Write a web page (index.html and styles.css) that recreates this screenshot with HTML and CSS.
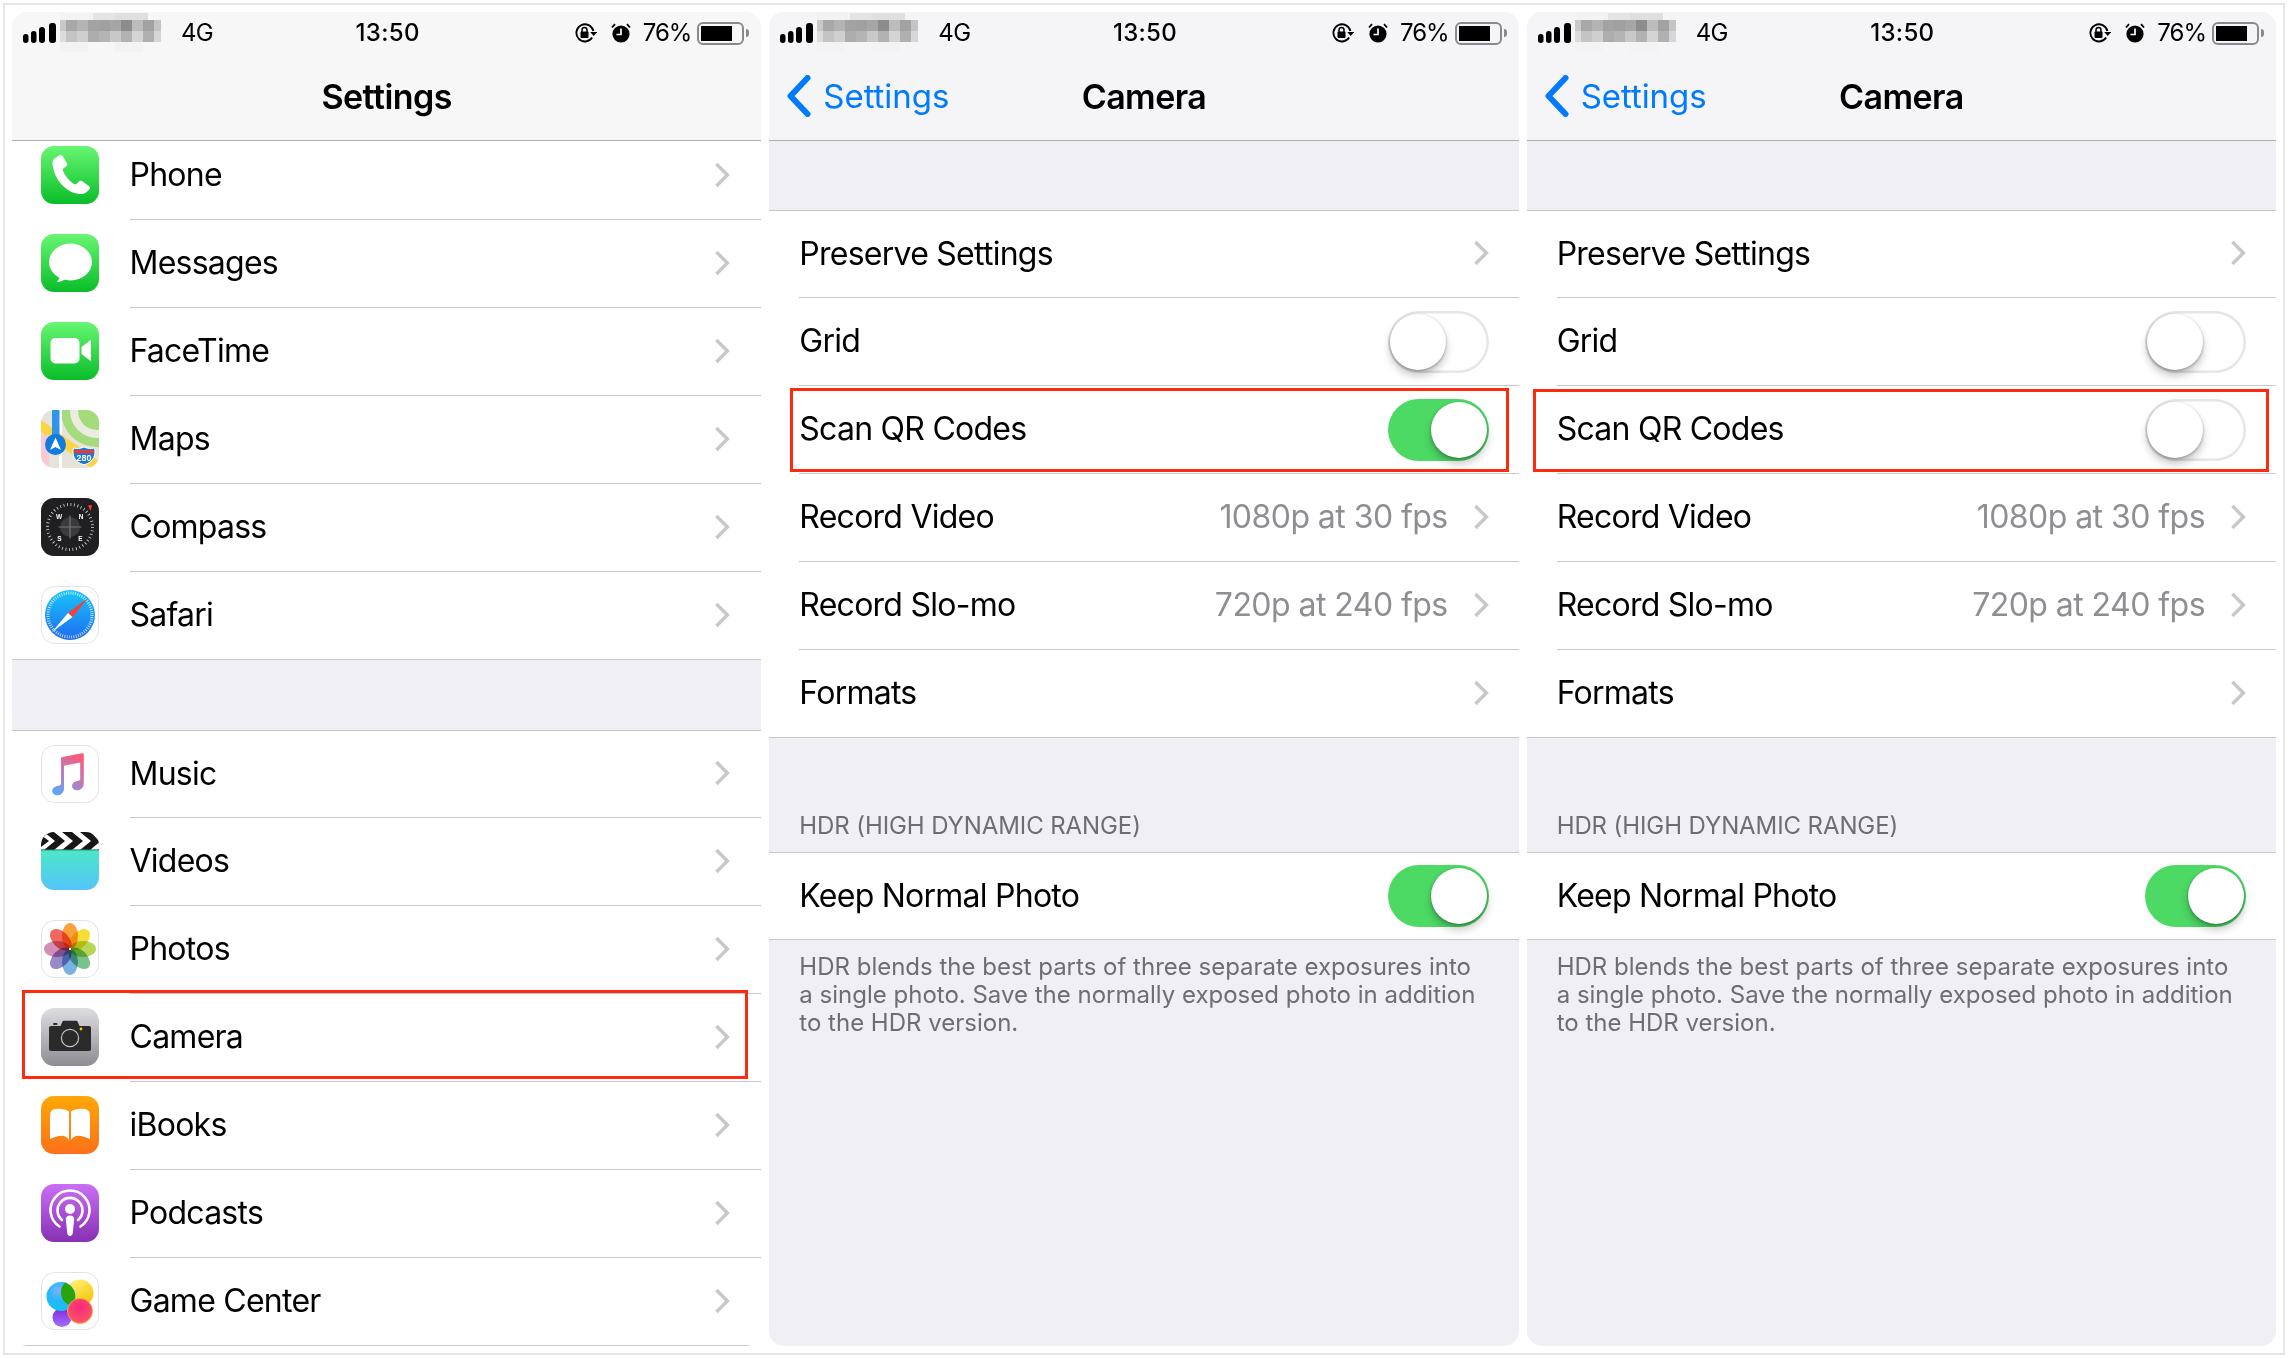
FILE: index.html
```html
<!DOCTYPE html>
<html lang="en">
<head>
<meta charset="utf-8">
<title>Camera settings: Scan QR Codes</title>
<link rel="stylesheet" href="styles.css">
</head>
<body>
<svg class="defs" aria-hidden="true">
  <symbol id="signal" viewBox="0 0 34 20"><rect x="0" y="11" width="5.5" height="9" rx="2.7"/><rect x="8" y="8" width="5.5" height="12" rx="2.7"/><rect x="16" y="4" width="6" height="16" rx="3"/><rect x="26" y="0" width="7" height="20" rx="3"/></symbol>
  <symbol id="carrier" viewBox="0 0 110 40">
    <g fill="#f3f3f3"><rect x="0" y="0" width="33" height="7"/><rect x="0" y="29" width="28" height="10"/><rect x="55" y="29" width="28" height="10"/></g>
    <g fill="#e4e4e4"><rect x="33" y="0" width="22" height="7"/><rect x="55" y="0" width="33" height="7" fill="#dfdfdf"/></g>
    <rect x="0" y="7" width="6" height="11" fill="#c9c9c9"/><rect x="6" y="7" width="11" height="11" fill="#a8a8a8"/><rect x="17" y="7" width="11" height="11" fill="#b4b4b4"/><rect x="28" y="7" width="11" height="11" fill="#a3a3a3"/><rect x="39" y="7" width="11" height="11" fill="#a0a0a0"/><rect x="50" y="7" width="11" height="11" fill="#a6a6a6"/><rect x="61" y="7" width="11" height="11" fill="#8c8c8c"/><rect x="72" y="7" width="11" height="11" fill="#bcbcbc"/><rect x="83" y="7" width="11" height="11" fill="#a2a2a2"/><rect x="94" y="7" width="7" height="11" fill="#c4c4c4"/>
    <rect x="0" y="18" width="6" height="11" fill="#dcdcdc"/><rect x="6" y="18" width="11" height="11" fill="#c4c4c4"/><rect x="17" y="18" width="11" height="11" fill="#cfcfcf"/><rect x="28" y="18" width="11" height="11" fill="#adadad"/><rect x="39" y="18" width="11" height="11" fill="#b4b4b4"/><rect x="50" y="18" width="11" height="11" fill="#c8c8c8"/><rect x="61" y="18" width="11" height="11" fill="#b2b2b2"/><rect x="72" y="18" width="11" height="11" fill="#d4d4d4"/><rect x="83" y="18" width="11" height="11" fill="#b0b0b0"/><rect x="94" y="18" width="7" height="11" fill="#d6d6d6"/>
  </symbol>
  <symbol id="rotlock" viewBox="0 0 22 20">
    <path d="M17.2 14.6A8.6 8.6 0 1 1 18.4 8" fill="none" stroke="#000" stroke-width="1.9"/><path d="M15.2 9h7l-3.5 4z" fill="#000"/>
    <rect x="5.5" y="8.5" width="8" height="6.5" rx="1" fill="#000"/><path d="M7 9V7a2.5 2.5 0 0 1 5 0v2" fill="none" stroke="#000" stroke-width="1.5"/>
  </symbol>
  <symbol id="alarm" viewBox="0 0 20 20">
    <circle cx="10" cy="11" r="8.6" fill="#000"/><path d="M10 5.5V11.5H5.5" fill="none" stroke="#fff" stroke-width="1.7"/>
    <path d="M1 4.5 4 1.2M19 4.5 16 1.2" fill="none" stroke="#000" stroke-width="1.8"/>
  </symbol>
  <symbol id="chev" viewBox="0 0 16 26"><path d="M2.4 2 13.4 13 2.4 24" fill="none" stroke="#c7c7cc" stroke-width="3.4"/></symbol>
  <symbol id="back" viewBox="0 0 25 42"><path d="M21.5 3 4.5 21 21.5 39" fill="none" stroke="#007aff" stroke-width="6" stroke-linecap="round" stroke-linejoin="round"/></symbol>
  <linearGradient id="gGreen" x1="0" y1="0" x2="0" y2="1"><stop offset="0" stop-color="#68f672"/><stop offset="1" stop-color="#0abd2a"/></linearGradient>
  <linearGradient id="gSafari" x1="0" y1="0" x2="0" y2="1"><stop offset="0" stop-color="#18c5fb"/><stop offset="1" stop-color="#1e6cf0"/></linearGradient>
  <linearGradient id="gMusic" x1="0.75" y1="0" x2="0.25" y2="1"><stop offset="0" stop-color="#fb5a74"/><stop offset=".55" stop-color="#b77ec0"/><stop offset="1" stop-color="#5aa8fa"/></linearGradient>
  <linearGradient id="gVideos" x1="0" y1="0" x2="0" y2="1"><stop offset="0" stop-color="#4ce8c6"/><stop offset="1" stop-color="#55c4fc"/></linearGradient>
  <linearGradient id="gCamera" x1="0" y1="0" x2="0" y2="1"><stop offset="0" stop-color="#dedee2"/><stop offset="1" stop-color="#8c8c92"/></linearGradient>
  <linearGradient id="gBooks" x1="0" y1="0" x2="0" y2="1"><stop offset="0" stop-color="#ffa807"/><stop offset="1" stop-color="#fc6f1a"/></linearGradient>
  <linearGradient id="gPod" x1="0" y1="0" x2="0" y2="1"><stop offset="0" stop-color="#ca6ff5"/><stop offset="1" stop-color="#8730b2"/></linearGradient>
  <radialGradient id="gBlue" cx=".4" cy=".3" r=".8"><stop offset="0" stop-color="#7fb0ff"/><stop offset=".45" stop-color="#22b8f8"/><stop offset="1" stop-color="#17c3f5"/></radialGradient>
  <linearGradient id="gYel" x1=".2" y1="0" x2=".8" y2="1"><stop offset="0" stop-color="#fff176"/><stop offset="1" stop-color="#f2c200"/></linearGradient>
  <radialGradient id="gPink" cx=".5" cy=".35" r=".7"><stop offset="0" stop-color="#f8267e"/><stop offset="1" stop-color="#ff5a63"/></radialGradient>
  <linearGradient id="gPur" x1="0" y1="0" x2="0" y2="1"><stop offset="0" stop-color="#7e2bd8"/><stop offset="1" stop-color="#a66cff"/></linearGradient>
</svg>

<main class="frame">

  <section class="phone phone-list">
    <header class="bar">
      <div class="status">
        <div class="status-left"><svg class="signal"><use href="#signal"/></svg><svg class="carrier"><use href="#carrier"/></svg><span class="net">4G</span></div>
        <div class="clock">13:50</div>
        <div class="status-right"><svg class="rotlock"><use href="#rotlock"/></svg><svg class="alarm"><use href="#alarm"/></svg><span class="pct">76%</span><div class="battery"><div class="cell"><div class="charge"></div></div><div class="nub"></div></div></div>
      </div>
      <nav class="nav nav-center"><h1 class="title">Settings</h1></nav>
    </header>

    <div class="group group-top">
      <div class="row row-app">
        <svg class="app" viewBox="0 0 58 58"><rect width="58" height="58" rx="13" fill="url(#gGreen)"/><path d="M15.5 11.2c-2.6.9-4.2 2.9-4 6 .6 8 4 15.800 9.300 21.600 5.300 5.700 11.700 8.900 18.900 9.300 3.300.2 7.100-2.300 9-5.300.5-.9.300-1.900-.5-2.500l-7.200-5.200c-1-.7-2-.6-2.800.2l-2.600 2.400c-.8.700-1.700.8-2.600.2-2.400-1.500-4.500-3.400-6.500-5.700-2-2.400-3.500-4.800-4.500-7.400-.4-1-.1-1.900.7-2.500l2.700-2.200c.9-.7 1.100-1.700.6-2.700l-4.600-7.800c-.9-.6-1.500-.9-2.400-.6z" fill="#fff"/></svg>
        <div class="row-body"><span class="label">Phone</span><svg class="chev"><use href="#chev"/></svg></div>
      </div>
      <div class="row row-app">
        <svg class="app" viewBox="0 0 58 58"><rect width="58" height="58" rx="13" fill="url(#gGreen)"/><ellipse cx="29.500" cy="28" rx="21.500" ry="18.500" fill="#fff"/><path d="M19 41c-.2 3-1.500 5.200-3.300 7 3.200.2 6.700-1.400 9-3.500z" fill="#fff"/></svg>
        <div class="row-body"><span class="label">Messages</span><svg class="chev"><use href="#chev"/></svg></div>
      </div>
      <div class="row row-app">
        <svg class="app" viewBox="0 0 58 58"><rect width="58" height="58" rx="13" fill="url(#gGreen)"/><rect x="9.500" y="16" width="29" height="25.500" rx="5" fill="#fff"/><path d="M40.500 25 49 18.500c.6-.4 1-.2 1 .5v19c0 .7-.4.900-1 .5l-8.500-6.500z" fill="#fff"/></svg>
        <div class="row-body"><span class="label">FaceTime</span><svg class="chev"><use href="#chev"/></svg></div>
      </div>
      <div class="row row-app">
        <svg class="app" viewBox="0 0 58 58">
          <defs><clipPath id="clipMaps"><rect width="58" height="58" rx="13"/></clipPath></defs>
          <g clip-path="url(#clipMaps)">
            <rect width="58" height="58" fill="#e6e3d9"/>
            <circle cx="56" cy="1" r="36" fill="#a4dc7c"/><circle cx="56" cy="1" r="27" fill="#ecebe2"/><circle cx="56" cy="1" r="19" fill="#a4dc7c"/>
            <rect x="18" y="0" width="3" height="58" fill="#fff"/>
            <path d="M0 10 58 51V58H50L0 22z" fill="#fdd447"/>
            <rect x="0" y="25" width="8" height="33" fill="#fbc8d6"/>
            <rect x="11" y="0" width="7.500" height="30" fill="#3095e8"/>
            <circle cx="14.500" cy="34.500" r="10.500" fill="#0f7ae0"/>
            <path d="M14.500 27.500 20 40l-5.500-3-5.500 3z" fill="#fff"/>
            <path d="M32.500 38c3 .8 7 .8 10.500-1 3.500 1.800 7.500 1.800 10.500 1 1.500 6 0 14-10.500 16.800C32.500 52 31 44 32.500 38z" fill="#1b78d8" stroke="#fff" stroke-width="1"/>
            <rect x="33" y="40" width="20" height="3.200" fill="#e43a42"/>
            <text x="43" y="51" class="shield-text" text-anchor="middle">280</text>
          </g>
        </svg>
        <div class="row-body"><span class="label">Maps</span><svg class="chev"><use href="#chev"/></svg></div>
      </div>
      <div class="row row-app">
        <svg class="app" viewBox="0 0 58 58">
          <rect width="58" height="58" rx="13" fill="#1f1f21"/>
          <circle cx="29" cy="29" r="22.500" fill="none" stroke="#d8d8d8" stroke-width="3" stroke-dasharray=".8 2.730"/>
          <circle cx="29" cy="29" r="10" fill="#3a3a3c"/>
          <path d="M29 17.500V40.500M17.500 29H40.500" stroke="#777" stroke-width="1.200"/>
          <path d="M47 7.500 51 7 49.500 13z" fill="#ff3b30"/>
          <text x="18" y="21" class="compass-text" text-anchor="middle">W</text><text x="40" y="21" class="compass-text" text-anchor="middle">N</text><text x="18.500" y="43" class="compass-text" text-anchor="middle">S</text><text x="39.500" y="43" class="compass-text" text-anchor="middle">E</text>
        </svg>
        <div class="row-body"><span class="label">Compass</span><svg class="chev"><use href="#chev"/></svg></div>
      </div>
      <div class="row row-app row-full">
        <svg class="app" viewBox="0 0 58 58">
          <rect x=".5" y=".5" width="57" height="57" rx="13" fill="#fff" stroke="#e3e3e3"/>
          <circle cx="29" cy="29" r="25" fill="url(#gSafari)"/>
          <circle cx="29" cy="29" r="22" fill="none" stroke="#fff" stroke-opacity=".75" stroke-width="3" stroke-dasharray=".9 1.400"/>
          <path d="M47 12 31.500 31 27 27z" fill="#ff3b30"/><path d="M11 46 27 27 31.500 31z" fill="#fff"/>
        </svg>
        <div class="row-body"><span class="label">Safari</span><svg class="chev"><use href="#chev"/></svg></div>
      </div>
    </div>

    <div class="band band-list"></div>

    <div class="group">
      <div class="row row-app row-first">
        <svg class="app" viewBox="0 0 58 58">
          <rect x=".5" y=".5" width="57" height="57" rx="13" fill="#fff" stroke="#e3e3e3"/>
          <path d="M20 13.500c0-.9.500-1.400 1.300-1.600L41 8.200c1.100-.2 1.800.3 1.800 1.400V38.500c0 3.700-2.800 6.800-6.700 6.800-3 0-5.100-1.700-5.100-4.300 0-2.700 2-4.400 5.100-5 1.500-.3 2.700-.6 3-1.300.1-.3.100-.6.100-1.100V17.500L23 20.800V43.500c0 3.700-2.800 6.800-6.700 6.800-3 0-5.100-1.700-5.100-4.300 0-2.700 2-4.400 5.100-5 1.500-.3 3.700-.6 3.700-2.500z" fill="url(#gMusic)"/>
        </svg>
        <div class="row-body"><span class="label">Music</span><svg class="chev"><use href="#chev"/></svg></div>
      </div>
      <div class="row row-app">
        <svg class="app" viewBox="0 0 58 58">
          <defs><clipPath id="clipVid"><rect width="58" height="58" rx="13"/></clipPath></defs>
          <g clip-path="url(#clipVid)">
            <rect y="18" width="58" height="40" fill="url(#gVideos)"/>
            <path d="M0 0H50L58 9V18H0z" fill="#171717"/>
            <path d="M0 3 8 9 0 15V18H3L14 9 3 0H0zM13 0 24 9 13 18H21L32 9 21 0zM31 0 42 9 31 18H39L50 9 39 0zM49 0 58 7.500V10.500L49 18H57L58 17V12 6L51 0z" fill="#fff"/>
            <rect y="17.400" width="58" height="1" fill="#2a7a63"/>
          </g>
        </svg>
        <div class="row-body"><span class="label">Videos</span><svg class="chev"><use href="#chev"/></svg></div>
      </div>
      <div class="row row-app">
        <svg class="app" viewBox="0 0 58 58">
          <rect x=".5" y=".5" width="57" height="57" rx="13" fill="#fff" stroke="#e3e3e3"/>
          <g class="petals">
            <ellipse cx="29" cy="16" rx="8" ry="13" fill="#f79a2c"/>
            <ellipse cx="29" cy="16" rx="8" ry="13" fill="#f5dc27" transform="rotate(45 29 29)"/>
            <ellipse cx="29" cy="16" rx="8" ry="13" fill="#b2d34a" transform="rotate(90 29 29)"/>
            <ellipse cx="29" cy="16" rx="8" ry="13" fill="#6dbd82" transform="rotate(135 29 29)"/>
            <ellipse cx="29" cy="16" rx="8" ry="13" fill="#70aade" transform="rotate(180 29 29)"/>
            <ellipse cx="29" cy="16" rx="8" ry="13" fill="#8f82c2" transform="rotate(225 29 29)"/>
            <ellipse cx="29" cy="16" rx="8" ry="13" fill="#cc86b2" transform="rotate(270 29 29)"/>
            <ellipse cx="29" cy="16" rx="8" ry="13" fill="#ef5c52" transform="rotate(315 29 29)"/>
          </g>
          <circle cx="29" cy="29" r="1.200" fill="#fff"/>
        </svg>
        <div class="row-body"><span class="label">Photos</span><svg class="chev"><use href="#chev"/></svg></div>
      </div>
      <div class="row row-app">
        <svg class="app" viewBox="0 0 58 58">
          <rect width="58" height="58" rx="13" fill="url(#gCamera)"/>
          <path d="M10 18h9.500l2-4.500c.3-.6.700-.8 1.300-.8h12.400c.6 0 1 .2 1.300.8l2 4.500H48c1.200 0 2 .8 2 2v21c0 1.200-.8 2-2 2H10c-1.200 0-2-.8-2-2V20c0-1.200.8-2 2-2z" fill="#2a2a2b"/>
          <rect x="12" y="15" width="4.500" height="2" rx="1" fill="#2a2a2b"/>
          <circle cx="29" cy="30" r="8.600" fill="none" stroke="#c2c2c2" stroke-width="1.200"/>
          <circle cx="40" cy="21" r="1.400" fill="#ffc800"/>
        </svg>
        <div class="row-body"><span class="label">Camera</span><svg class="chev"><use href="#chev"/></svg></div>
        <div class="mark mark-camera"></div>
      </div>
      <div class="row row-app">
        <svg class="app" viewBox="0 0 58 58">
          <rect width="58" height="58" rx="13" fill="url(#gBooks)"/>
          <path d="M9 19c0-3.500 2-5.500 5-6 5-.8 10.500-.3 14 2.500V44c-1.500-2.700-4.200-4.300-7-4.300-4.500 0-7.500 1.600-12 3.300z" fill="#fff"/>
          <path d="M49 19c0-3.500-2-5.500-5-6-5-.8-10.500-.3-14 2.500V44c1.500-2.700 4.200-4.300 7-4.300 4.500 0 7.500 1.600 12 3.300z" fill="#fff"/>
        </svg>
        <div class="row-body"><span class="label">iBooks</span><svg class="chev"><use href="#chev"/></svg></div>
      </div>
      <div class="row row-app">
        <svg class="app" viewBox="0 0 58 58">
          <rect width="58" height="58" rx="13" fill="url(#gPod)"/>
          <path d="M18.500 42.500A19.500 19.500 0 1 1 39.500 42.500" fill="none" stroke="#fff" stroke-width="2.600" stroke-linecap="round"/>
          <path d="M21 36A12.500 12.500 0 1 1 37 36" fill="none" stroke="#fff" stroke-width="2.600" stroke-linecap="round"/>
          <circle cx="29" cy="25" r="5" fill="#fff"/>
          <path d="M24.800 35c0-2 1.800-3.500 4.200-3.500s4.200 1.500 4.200 3.500l-1.500 14.500c-.3 1.500-1.300 2.500-2.700 2.500s-2.400-1-2.700-2.500z" fill="#fff"/>
        </svg>
        <div class="row-body"><span class="label">Podcasts</span><svg class="chev"><use href="#chev"/></svg></div>
      </div>
      <div class="row row-app row-last">
        <svg class="app" viewBox="0 0 58 58">
          <rect x=".5" y=".5" width="57" height="57" rx="13" fill="#fff" stroke="#e3e3e3"/>
          <circle cx="21" cy="45.500" r="9.500" fill="url(#gPur)"/>
          <circle cx="39" cy="21" r="13.500" fill="url(#gYel)"/>
          <circle cx="20" cy="24.500" r="14.500" fill="url(#gBlue)"/>
          <path d="M24.500 10.700A14.500 14.500 0 0 1 33.800 27 14 14 0 0 1 30.200 33.500 13.500 13.500 0 0 1 25.500 9.500z" fill="#2aa40d"/>
          <circle cx="39" cy="39" r="12.500" fill="url(#gPink)" stroke="#ffac2a" stroke-width=".8"/>
        </svg>
        <div class="row-body"><span class="label">Game Center</span><svg class="chev"><use href="#chev"/></svg></div>
      </div>
      <div class="end-rule"></div>
    </div>
  </section>

  <section class="phone phone-detail">
    <header class="bar bar-tint">
      <div class="status">
        <div class="status-left"><svg class="signal"><use href="#signal"/></svg><svg class="carrier"><use href="#carrier"/></svg><span class="net">4G</span></div>
        <div class="clock">13:50</div>
        <div class="status-right"><svg class="rotlock"><use href="#rotlock"/></svg><svg class="alarm"><use href="#alarm"/></svg><span class="pct">76%</span><div class="battery"><div class="cell"><div class="charge"></div></div><div class="nub"></div></div></div>
      </div>
      <nav class="nav nav-back">
        <div class="back"><svg class="back-chev"><use href="#back"/></svg><span class="back-text">Settings</span></div>
        <h1 class="title">Camera</h1>
      </nav>
    </header>
    <div class="band band-top"></div>
    <div class="group">
      <div class="row row-first"><div class="row-body"><span class="label">Preserve Settings</span><svg class="chev"><use href="#chev"/></svg></div></div>
      <div class="row"><div class="row-body"><span class="label">Grid</span><div class="toggle"><div class="knob"></div></div></div></div>
      <div class="row"><div class="row-body"><span class="label">Scan QR Codes</span><div class="toggle toggle-on"><div class="knob"></div></div></div><div class="mark mark-scan-on"></div></div>
      <div class="row"><div class="row-body"><span class="label">Record Video</span><span class="value">1080p at 30 fps</span><svg class="chev"><use href="#chev"/></svg></div></div>
      <div class="row"><div class="row-body"><span class="label">Record Slo-mo</span><span class="value">720p at 240 fps</span><svg class="chev"><use href="#chev"/></svg></div></div>
      <div class="row row-full"><div class="row-body"><span class="label">Formats</span><svg class="chev"><use href="#chev"/></svg></div></div>
    </div>
    <div class="section-head">HDR (HIGH DYNAMIC RANGE)</div>
    <div class="group">
      <div class="row row-full row-first"><div class="row-body"><span class="label">Keep Normal Photo</span><div class="toggle toggle-on"><div class="knob"></div></div></div></div>
    </div>
    <p class="footnote">HDR blends the best parts of three separate exposures into<br>a single photo. Save the normally exposed photo in addition<br>to the HDR version.</p>
  </section>

  <section class="phone phone-detail">
    <header class="bar bar-tint">
      <div class="status">
        <div class="status-left"><svg class="signal"><use href="#signal"/></svg><svg class="carrier"><use href="#carrier"/></svg><span class="net">4G</span></div>
        <div class="clock">13:50</div>
        <div class="status-right"><svg class="rotlock"><use href="#rotlock"/></svg><svg class="alarm"><use href="#alarm"/></svg><span class="pct">76%</span><div class="battery"><div class="cell"><div class="charge"></div></div><div class="nub"></div></div></div>
      </div>
      <nav class="nav nav-back">
        <div class="back"><svg class="back-chev"><use href="#back"/></svg><span class="back-text">Settings</span></div>
        <h1 class="title">Camera</h1>
      </nav>
    </header>
    <div class="band band-top"></div>
    <div class="group">
      <div class="row row-first"><div class="row-body"><span class="label">Preserve Settings</span><svg class="chev"><use href="#chev"/></svg></div></div>
      <div class="row"><div class="row-body"><span class="label">Grid</span><div class="toggle"><div class="knob"></div></div></div></div>
      <div class="row"><div class="row-body"><span class="label">Scan QR Codes</span><div class="toggle"><div class="knob"></div></div></div><div class="mark mark-scan-off"></div></div>
      <div class="row"><div class="row-body"><span class="label">Record Video</span><span class="value">1080p at 30 fps</span><svg class="chev"><use href="#chev"/></svg></div></div>
      <div class="row"><div class="row-body"><span class="label">Record Slo-mo</span><span class="value">720p at 240 fps</span><svg class="chev"><use href="#chev"/></svg></div></div>
      <div class="row row-full"><div class="row-body"><span class="label">Formats</span><svg class="chev"><use href="#chev"/></svg></div></div>
    </div>
    <div class="section-head">HDR (HIGH DYNAMIC RANGE)</div>
    <div class="group">
      <div class="row row-full row-first"><div class="row-body"><span class="label">Keep Normal Photo</span><div class="toggle toggle-on"><div class="knob"></div></div></div></div>
    </div>
    <p class="footnote">HDR blends the best parts of three separate exposures into<br>a single photo. Save the normally exposed photo in addition<br>to the HDR version.</p>
  </section>

</main>
</body>
</html>
```

FILE: styles.css
```css
* { box-sizing: border-box; }

html, body {
  margin: 0;
  background: #fff;
}

body {
  width: 2289px;
  height: 1358px;
  overflow: hidden;
  padding: 3px 4px 3px 3px;
  font-family: Inter, "Noto Sans", "Liberation Sans", sans-serif;
  color: #000;
}

.defs {
  position: absolute;
  width: 0;
  height: 0;
}

.frame {
  height: 1352px;
  border: 2px solid #e6e6e6;
  padding: 7px;
  display: grid;
  grid-template-columns: repeat(3, 1fr);
  gap: 8px;
}

.phone {
  height: 1334px;
  border-radius: 15px;
  overflow: hidden;
  display: flex;
  flex-direction: column;
}

.phone-list { background: #fff; }
.phone-detail { background: #efeff4; }

/* top bar */
.bar {
  position: relative;
  z-index: 2;
  height: 129px;
  flex: none;
  background: #f7f7f7;
  border-bottom: 1.5px solid #aeaeb2;
}

.bar-tint { background: #f5f5f8; }

.status {
  height: 42px;
  display: grid;
  grid-template-columns: 1fr auto 1fr;
  align-items: center;
}

.status-left {
  display: flex;
  align-items: center;
  padding-left: 11px;
}

.signal { width: 34px; height: 20px; fill: #000; flex: none; }
.carrier { width: 110px; height: 40px; margin-left: 3px; margin-right: 11px; flex: none; }

.net, .pct {
  font-size: 24px;
  line-height: 40px;
  letter-spacing: -0.7px;
}

.pct { letter-spacing: -1px; }

.clock {
  margin-left: 2px;
  font-size: 24px;
  font-weight: 500;
  line-height: 40px;
  letter-spacing: 0.3px;
}

.status-right {
  display: flex;
  align-items: center;
  justify-content: flex-end;
  padding-right: 12px;
}

.rotlock { width: 22px; height: 20px; flex: none; }
.alarm { width: 20px; height: 20px; margin-left: 14px; margin-right: 12px; flex: none; }
.pct { margin-right: 6px; }

.battery { display: flex; align-items: center; flex: none; }

.cell {
  width: 47px;
  height: 23px;
  border: 2px solid #8a8a8e;
  border-radius: 6px;
  padding: 2px;
}

.charge { width: 31px; height: 15px; background: #000; }

.nub {
  width: 3px;
  height: 8px;
  margin-left: 2px;
  background: #8a8a8e;
  border-radius: 0 3px 3px 0;
}

.nav {
  height: 86px;
  padding-bottom: 2px;
  display: grid;
  align-items: center;
}

.nav-center { justify-items: center; }

.nav-back {
  grid-template-columns: 1fr auto 1fr;
}

.title {
  margin: 0;
  font-size: 34px;
  font-weight: 600;
  letter-spacing: -0.55px;
}

.back {
  display: flex;
  align-items: center;
  padding-left: 17px;
}

.back-chev { width: 25px; height: 42px; flex: none; }

.back-text {
  margin-left: 12px;
  font-size: 33px;
  letter-spacing: -0.05px;
  color: #007aff;
}

/* lists */
.group { background: #fff; }
.group-top { overflow: hidden; }
.group-top .row:first-child { margin-top: -9px; }

.row {
  position: relative;
  height: 88px;
  display: flex;
  padding-left: 30px;
}

.row-app { padding-left: 29px; }
.row-first { height: 87px; }

.row-body {
  flex: 1;
  min-width: 0;
  display: flex;
  align-items: center;
  padding-right: 30px;
  border-bottom: 1.5px solid #c8c7cc;
}

.row-app .row-body { padding-right: 31.5px; }

.row-full { padding-left: 0; }
.row-full .row-body { padding-left: 30px; }

.app {
  width: 58px;
  height: 58px;
  flex: none;
  align-self: center;
  margin-right: 30.5px;
  margin-bottom: 1.5px;
}

.row-app.row-full { padding-left: 29px; position: relative; }
.row-app.row-full .row-body { padding-left: 0; border-bottom-color: transparent; }
.row-app.row-full::after {
  content: "";
  position: absolute;
  left: 0;
  right: 0;
  bottom: 0;
  height: 1.5px;
  background: #c8c7cc;
}

.row-last { height: 86.5px; }
.row-last .row-body { border-bottom: 0; }

.end-rule {
  height: 1.5px;
  margin: 0 9px 0 8px;
  background: #c8c7cc;
}

.label {
  flex: 1;
  font-size: 32px;
  line-height: 40px;
  letter-spacing: -0.75px;
  margin-bottom: 1px;
  white-space: nowrap;
}

.value {
  font-size: 32px;
  line-height: 40px;
  letter-spacing: -0.55px;
  color: #8e8e93;
  margin-right: 25px;
  margin-bottom: 1px;
  white-space: nowrap;
}

.chev { width: 16px; height: 26px; flex: none; margin-bottom: 1.5px; }

.band-list {
  height: 71px;
  background: #efeff4;
  border-bottom: 1.5px solid #c8c7cc;
}

.band-top {
  height: 70px;
  flex: none;
  border-bottom: 1.5px solid #c8c7cc;
}

.section-head {
  height: 115px;
  flex: none;
  display: flex;
  align-items: flex-end;
  padding: 0 0 12px 30px;
  border-bottom: 1.5px solid #c8c7cc;
  font-size: 24px;
  line-height: 28px;
  letter-spacing: -0.1px;
  color: #6d6d72;
}

.footnote {
  margin: 0;
  padding: 13px 0 0 30px;
  font-size: 24px;
  line-height: 28px;
  letter-spacing: 0;
  color: #6d6d72;
}

/* switches */
.toggle {
  width: 101px;
  height: 62px;
  flex: none;
  display: flex;
  align-items: center;
  padding: 0 2px;
  background: #fff;
  border-radius: 31px;
  box-shadow: inset 0 0 0 2.5px #e6e6e6;
}

.toggle-on {
  justify-content: flex-end;
  background: #4cd964;
  box-shadow: none;
}

.knob {
  width: 56px;
  height: 56px;
  border-radius: 50%;
  background: #fff;
  box-shadow: 0 6px 8px rgba(0, 0, 0, 0.22), 0 1px 3px rgba(0, 0, 0, 0.3);
}

/* red annotation boxes */
.mark {
  position: absolute;
  z-index: 3;
  border: 3px solid #ff2a0e;
}

.mark-camera { left: 10px; right: 13px; top: -4px; height: 89px; }
.mark-scan-on { left: 21px; right: 10px; top: 2px; height: 84px; }
.mark-scan-off { left: 6px; right: 7px; top: 3px; height: 83px; }

/* svg text and effects */
.petals { mix-blend-mode: multiply; isolation: isolate; }
.petals ellipse { mix-blend-mode: multiply; opacity: .92; }

.compass-text {
  font: 700 6.5px "Liberation Sans", sans-serif;
  fill: #fff;
}

.shield-text {
  font: 700 9px "Liberation Sans", sans-serif;
  fill: #fff;
}
```
